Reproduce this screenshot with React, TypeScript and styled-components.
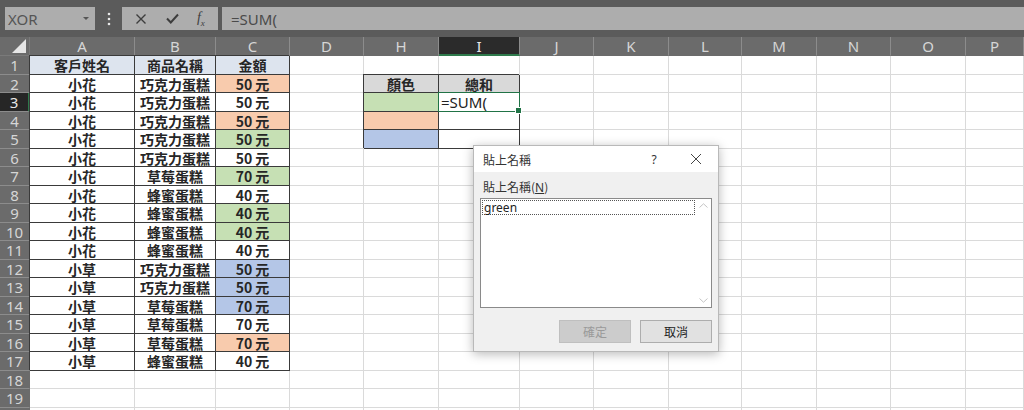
import React from 'react'
import styled, { createGlobalStyle } from 'styled-components'

const GlobalStyle = createGlobalStyle`
  html, body {
    margin: 0;
    padding: 0;
    background: #fff;
    overflow: hidden;
  }
  body {
    font-family: 'Noto Sans CJK TC', 'Noto Sans', sans-serif;
  }
`

const CJK = `'Noto Sans CJK TC', 'Noto Sans', sans-serif`

const Page = styled.div`
  position: relative;
  width: 1024px;
  height: 410px;
  overflow: hidden;
  background: #fff;
`

const Toolbar = styled.div`
  display: flex;
  align-items: stretch;
  height: 37px;
  box-sizing: border-box;
  padding: 7px 0 7px 5px;
  background: #5b5b5b;
`

const NameBox = styled.div`
  width: 90px;
  display: flex;
  align-items: center;
  justify-content: space-between;
  padding: 0 6px 0 3px;
  box-sizing: border-box;
  background: #adadad;
  color: #555;
  font: 15px 'Noto Sans', sans-serif;
`

const Caret = styled.span`
  width: 0;
  height: 0;
  border-left: 3px solid transparent;
  border-right: 3px solid transparent;
  border-top: 3px solid #555;
`

const Grip = styled.div`
  width: 27px;
  display: flex;
  align-items: center;
  justify-content: center;
`

const FxBox = styled.div`
  width: 96px;
  display: flex;
  align-items: center;
  justify-content: space-around;
  padding: 0 4px;
  box-sizing: border-box;
  background: #adadad;
  color: #3d3d3d;
`

const FxLabel = styled.span`
  font-family: 'Liberation Serif', serif;
  font-style: italic;
  font-size: 14px;
  color: #3d3d3d;
  sub {
    font-size: 9px;
  }
`

const FormulaInput = styled.div`
  flex: 1;
  margin-left: 4px;
  display: flex;
  align-items: center;
  padding-left: 9px;
  background: #adadad;
  color: #4a4a4a;
  font: 15px 'Noto Sans', sans-serif;
`

const Sheet = styled.div<{ $cols: string; $rows: string }>`
  display: grid;
  grid-template-columns: ${p => p.$cols};
  grid-template-rows: ${p => p.$rows};
`

const Corner = styled.div`
  background: #6b6b6b;
  border-right: 1px solid #7a7a7a;
  border-bottom: 1px solid #7a7a7a;
  display: flex;
  align-items: flex-end;
  justify-content: flex-end;
  padding: 0 3px 2px 0;
`

const ColHeader = styled.div<{ $active?: boolean }>`
  display: flex;
  align-items: center;
  justify-content: center;
  background: ${p => (p.$active ? '#2b2b2b' : '#6b6b6b')};
  color: ${p => (p.$active ? '#e8e8e8' : '#d6d6d6')};
  border-right: 1px solid #8c8c8c;
  border-bottom: ${p => (p.$active ? '2px solid #2f7a4c' : '1px solid #6b6b6b')};
  box-sizing: border-box;
  font: 15px 'Noto Sans', sans-serif;
`

const RowHeader = styled.div<{ $active?: boolean }>`
  display: flex;
  align-items: center;
  justify-content: center;
  background: ${p => (p.$active ? '#262626' : '#6b6b6b')};
  color: ${p => (p.$active ? '#e8e8e8' : '#d6d6d6')};
  border-right: ${p => (p.$active ? '2px solid #2f7a4c' : '1px solid #6b6b6b')};
  border-bottom: 1px solid #8c8c8c;
  box-sizing: border-box;
  font: 15px 'Noto Sans', sans-serif;
`

const Cell = styled.div<{ $fill?: string; $boxed?: boolean; $left?: boolean }>`
  display: flex;
  align-items: center;
  justify-content: ${p => (p.$left ? 'flex-start' : 'center')};
  padding: 0 2px;
  box-sizing: border-box;
  white-space: nowrap;
  font-family: ${CJK};
  font-size: 14px;
  font-weight: 600;
  color: #262626;
  background: ${p => p.$fill ?? 'transparent'};
  border-right: 1px solid ${p => (p.$boxed ? '#3a3a3a' : '#dadada')};
  border-bottom: 1px solid ${p => (p.$boxed ? '#3a3a3a' : '#dadada')};
  box-shadow: ${p => (p.$boxed ? '-1px -1px 0 0 #3a3a3a' : 'none')};
`

const EditCell = styled(Cell)`
  position: relative;
  font-family: 'Noto Sans', sans-serif;
  font-weight: 400;
  font-size: 15px;
  color: #222;
  &::after {
    content: '';
    position: absolute;
    left: -1px;
    top: -1px;
    right: -1px;
    bottom: -1px;
    border: 1px solid #217346;
  }
`

const FillHandle = styled.span`
  position: absolute;
  right: -3px;
  bottom: -3px;
  width: 5px;
  height: 5px;
  background: #217346;
  border: 1px solid #fff;
  z-index: 1;
`

const Dialog = styled.div`
  position: absolute;
  left: 473px;
  top: 145px;
  width: 246px;
  height: 207px;
  display: flex;
  flex-direction: column;
  box-sizing: border-box;
  background: #f0f0f0;
  border: 1px solid #b9b9b9;
  box-shadow: 0 2px 10px rgba(0, 0, 0, 0.28);
  font-family: ${CJK};
  font-size: 12px;
  color: #333;
`

const TitleBar = styled.div`
  height: 26px;
  display: flex;
  align-items: center;
  padding-left: 9px;
  background: #fff;
`

const Title = styled.span`
  flex: 1;
`

const HelpMark = styled.span`
  width: 20px;
  text-align: center;
  font: 12px 'Noto Sans', sans-serif;
  margin-right: 20px;
`

const CloseX = styled.span`
  width: 24px;
  display: flex;
  justify-content: center;
  margin-right: 10px;
`

const Body = styled.div`
  flex: 1;
  display: flex;
  flex-direction: column;
  padding: 8px 6px 8px 6px;
`

const FieldLabel = styled.div`
  padding-left: 3px;
  line-height: 14px;
  margin-bottom: 3px;
  u {
    font-family: 'Noto Sans', sans-serif;
  }
`

const ListBox = styled.div`
  height: 110px;
  display: flex;
  box-sizing: border-box;
  background: #fff;
  border: 1px solid #8a8a8a;
`

const ListItems = styled.div`
  flex: 1;
  padding: 1px 0 0 1px;
`

const ListItem = styled.div`
  height: 13px;
  display: flex;
  align-items: center;
  padding-left: 1px;
  border: 1px dotted #555;
  font: 12px 'Noto Sans', sans-serif;
  color: #222;
`

const ScrollTrack = styled.div`
  width: 16px;
  display: flex;
  flex-direction: column;
  justify-content: space-between;
  align-items: center;
  padding: 4px 0;
`

const ButtonRow = styled.div`
  margin-top: auto;
  display: flex;
  justify-content: flex-end;
  gap: 9px;
`

const DialogButton = styled.div<{ $disabled?: boolean }>`
  width: 72px;
  height: 23px;
  display: flex;
  align-items: center;
  justify-content: center;
  box-sizing: border-box;
  background: ${p => (p.$disabled ? '#cccccc' : '#e1e1e1')};
  border: 1px solid ${p => (p.$disabled ? '#bfbfbf' : '#adadad')};
  color: ${p => (p.$disabled ? '#9a9a9a' : '#222')};
`

type Fill = '' | 'orange' | 'green' | 'blue'

const FILLS: Record<string, string> = {
  orange: '#f8cbad',
  green: '#c6e0b4',
  blue: '#b4c6e7',
  head: '#dde4ee',
  gray: '#d9d9d9',
}

const orders: [string, string, string, Fill][] = [
  ['小花', '巧克力蛋糕', '50 元', 'orange'],
  ['小花', '巧克力蛋糕', '50 元', ''],
  ['小花', '巧克力蛋糕', '50 元', 'orange'],
  ['小花', '巧克力蛋糕', '50 元', 'green'],
  ['小花', '巧克力蛋糕', '50 元', ''],
  ['小花', '草莓蛋糕', '70 元', 'green'],
  ['小花', '蜂蜜蛋糕', '40 元', ''],
  ['小花', '蜂蜜蛋糕', '40 元', 'green'],
  ['小花', '蜂蜜蛋糕', '40 元', 'green'],
  ['小花', '蜂蜜蛋糕', '40 元', ''],
  ['小草', '巧克力蛋糕', '50 元', 'blue'],
  ['小草', '巧克力蛋糕', '50 元', 'blue'],
  ['小草', '草莓蛋糕', '70 元', 'blue'],
  ['小草', '草莓蛋糕', '70 元', ''],
  ['小草', '草莓蛋糕', '70 元', 'orange'],
  ['小草', '蜂蜜蛋糕', '40 元', ''],
]

const columns = [
  { key: 'A', w: 105 },
  { key: 'B', w: 81 },
  { key: 'C', w: 74 },
  { key: 'D', w: 74 },
  { key: 'H', w: 75 },
  { key: 'I', w: 81 },
  { key: 'J', w: 74 },
  { key: 'K', w: 75 },
  { key: 'L', w: 73 },
  { key: 'M', w: 75 },
  { key: 'N', w: 74 },
  { key: 'O', w: 75 },
  { key: 'P', w: 58 },
]

// row 20 only peeks in at the bottom edge, so its number is not drawn
const ROW_COUNT = 20
const LAST_NUMBERED_ROW = 19

type CellInfo = { text?: string; fill?: string; boxed?: boolean }

const cellAt = (col: string, row: number): CellInfo => {
  if (['A', 'B', 'C'].includes(col) && row <= 17) {
    if (row === 1) {
      const heads: Record<string, string> = { A: '客戶姓名', B: '商品名稱', C: '金額' }
      return { text: heads[col], fill: FILLS.head, boxed: true }
    }
    const o = orders[row - 2]
    const idx = col === 'A' ? 0 : col === 'B' ? 1 : 2
    return {
      text: o[idx],
      fill: col === 'C' && o[3] ? FILLS[o[3]] : undefined,
      boxed: true,
    }
  }
  if ((col === 'H' || col === 'I') && row >= 2 && row <= 5) {
    if (row === 2) return { text: col === 'H' ? '顏色' : '總和', fill: FILLS.gray, boxed: true }
    if (col === 'H') {
      const f = ['green', 'orange', 'blue'][row - 3]
      return { fill: FILLS[f], boxed: true }
    }
    return { boxed: true }
  }
  return {}
}

const SelectAll = () => (
  <svg width="14" height="14" viewBox="0 0 14 14">
    <polygon points="14,0 14,14 0,14" fill="#e6e6e6" />
  </svg>
)

const App: React.FC = () => {
  const colTemplate = ['30px', ...columns.map(c => `${c.w}px`)].join(' ')
  const rowTemplate = ['19px', ...Array.from({ length: ROW_COUNT }, (_, i) => (i % 2 === 0 ? '19px' : '18px'))].join(' ')
  const rows = Array.from({ length: ROW_COUNT }, (_, i) => i + 1)

  return <Page>
    <GlobalStyle />
    <Toolbar>
      <NameBox>XOR<Caret /></NameBox>
      <Grip>
        <svg width="4" height="14" viewBox="0 0 4 14">
          <circle cx="2" cy="2" r="1.3" fill="#e8e8e8" />
          <circle cx="2" cy="7" r="1.3" fill="#e8e8e8" />
          <circle cx="2" cy="12" r="1.3" fill="#e8e8e8" />
        </svg>
      </Grip>
      <FxBox>
        <svg width="12" height="12" viewBox="0 0 12 12">
          <path d="M1.5 1.5 L10.5 10.5 M10.5 1.5 L1.5 10.5" stroke="#3d3d3d" strokeWidth="1.4" />
        </svg>
        <svg width="13" height="11" viewBox="0 0 13 11">
          <path d="M1 5.5 L4.8 9.5 L12 1.5" stroke="#3d3d3d" strokeWidth="2" fill="none" />
        </svg>
        <FxLabel>f<sub>x</sub></FxLabel>
      </FxBox>
      <FormulaInput>=SUM(</FormulaInput>
    </Toolbar>

    <Sheet $cols={colTemplate} $rows={rowTemplate}>
      <Corner><SelectAll /></Corner>
      {columns.map(c => <ColHeader key={c.key} $active={c.key === 'I'}>{c.key}</ColHeader>)}
      {rows.map(r => <React.Fragment key={r}>
        <RowHeader $active={r === 3}>{r <= LAST_NUMBERED_ROW ? r : ''}</RowHeader>
        {columns.map(c => {
          const info = cellAt(c.key, r)
          if (c.key === 'I' && r === 3) {
            return <EditCell key={c.key} $boxed $left>=SUM(<FillHandle /></EditCell>
          }
          return <Cell key={c.key} $fill={info.fill} $boxed={info.boxed}>{info.text}</Cell>
        })}
      </React.Fragment>)}
    </Sheet>

    <Dialog>
      <TitleBar>
        <Title>貼上名稱</Title>
        <HelpMark>?</HelpMark>
        <CloseX>
          <svg width="12" height="12" viewBox="0 0 12 12">
            <path d="M1 1 L11 11 M11 1 L1 11" stroke="#444" strokeWidth="1" />
          </svg>
        </CloseX>
      </TitleBar>
      <Body>
        <FieldLabel>貼上名稱(<u>N</u>)</FieldLabel>
        <ListBox>
          <ListItems>
            <ListItem>green</ListItem>
          </ListItems>
          <ScrollTrack>
            <svg width="9" height="5" viewBox="0 0 9 5">
              <path d="M0.5 4.5 L4.5 0.8 L8.5 4.5" stroke="#c4c4c4" fill="none" />
            </svg>
            <svg width="9" height="5" viewBox="0 0 9 5">
              <path d="M0.5 0.5 L4.5 4.2 L8.5 0.5" stroke="#c4c4c4" fill="none" />
            </svg>
          </ScrollTrack>
        </ListBox>
        <ButtonRow>
          <DialogButton $disabled>確定</DialogButton>
          <DialogButton>取消</DialogButton>
        </ButtonRow>
      </Body>
    </Dialog>
  </Page>
}

export default App
